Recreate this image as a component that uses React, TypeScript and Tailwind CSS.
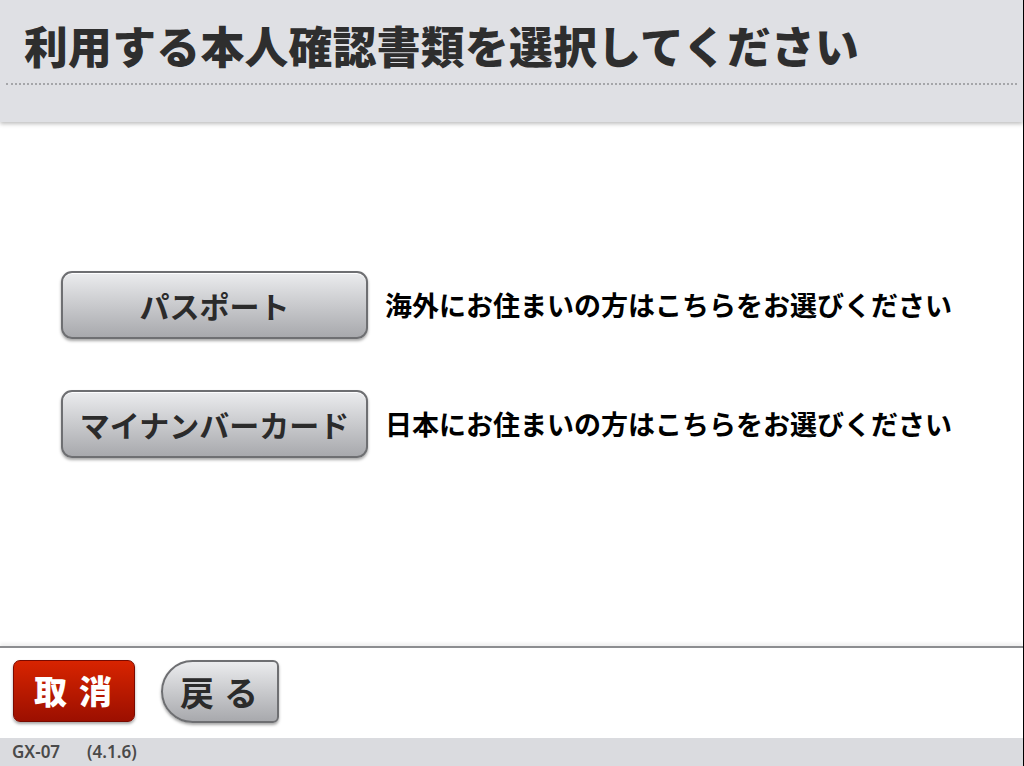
import React from 'react';

const jp = "font-['Noto_Sans_CJK_JP','Noto_Sans',sans-serif]";

function OptionRow({ label, note }: { label: string; note: string }) {
  return (
    <div className="flex items-center">
      <button
        className={`${jp} w-[307px] h-[68px] rounded-[11px] border-2 border-[#6e6f72] bg-gradient-to-b from-[#ebecee] to-[#a8a9ad] text-[30px] font-bold text-[#2b2b2b] shadow-[0_2px_3px_rgba(0,0,0,0.35),inset_0_1px_0_rgba(255,255,255,0.9)]`}
      >
        {label}
      </button>
      <span className={`${jp} ml-[17px] text-[27px] font-bold text-black`}>{note}</span>
    </div>
  );
}

export default function App() {
  return (
    <div className="flex h-[766px] w-[1024px] flex-col border-r border-black bg-white">
      <header className="relative h-[122px] shrink-0 bg-[#dfe0e4] shadow-[0_2px_4px_rgba(0,0,0,0.25)]">
        <h1 className={`${jp} pl-[24px] pt-[15px] text-[43.8px] font-black leading-[60px] text-[#2e2e2e] tracking-[0.3px]`}>
          利用する本人確認書類を選択してください
        </h1>
        <div className="mx-[6px] mt-[8px] border-t-2 border-dotted border-[#a5a6a9]" />
      </header>

      <main className="flex flex-1 flex-col gap-[51px] pl-[61px] pt-[149px]">
        <OptionRow label="パスポート" note="海外にお住まいの方はこちらをお選びください" />
        <OptionRow label="マイナンバーカード" note="日本にお住まいの方はこちらをお選びください" />
      </main>

      <div className="flex h-[92px] shrink-0 items-start gap-[26px] border-t-2 border-[#8c8d90] pl-[13px] pt-[12px] shadow-[0_-3px_3px_rgba(0,0,0,0.06)]">
        <button
          className={`${jp} h-[62px] w-[122px] rounded-[7px] border border-[#7a0a00] bg-gradient-to-b from-[#d82400] to-[#9c0f00] text-[33px] font-black tracking-[12px] pl-[10px] text-white shadow-[0_2px_3px_rgba(0,0,0,0.35)]`}
        >
          取消
        </button>
        <button
          className={`${jp} h-[63px] w-[118px] rounded-l-[32px] rounded-r-[6px] border-2 border-[#6e6f72] bg-gradient-to-b from-[#ebecee] to-[#a8a9ad] text-[34px] font-bold tracking-[10px] pl-[8px] text-[#2b2b2b] shadow-[0_2px_3px_rgba(0,0,0,0.35)]`}
        >
          戻る
        </button>
      </div>

      <footer className="flex h-[28px] shrink-0 items-center bg-[#dadbdf] pl-[12px] font-['Noto_Sans',sans-serif] text-[17px] font-semibold text-[#4a4a4a]">
        <span>GX-07</span>
        <span className="ml-[27px]">(4.1.6)</span>
      </footer>
    </div>
  );
}
